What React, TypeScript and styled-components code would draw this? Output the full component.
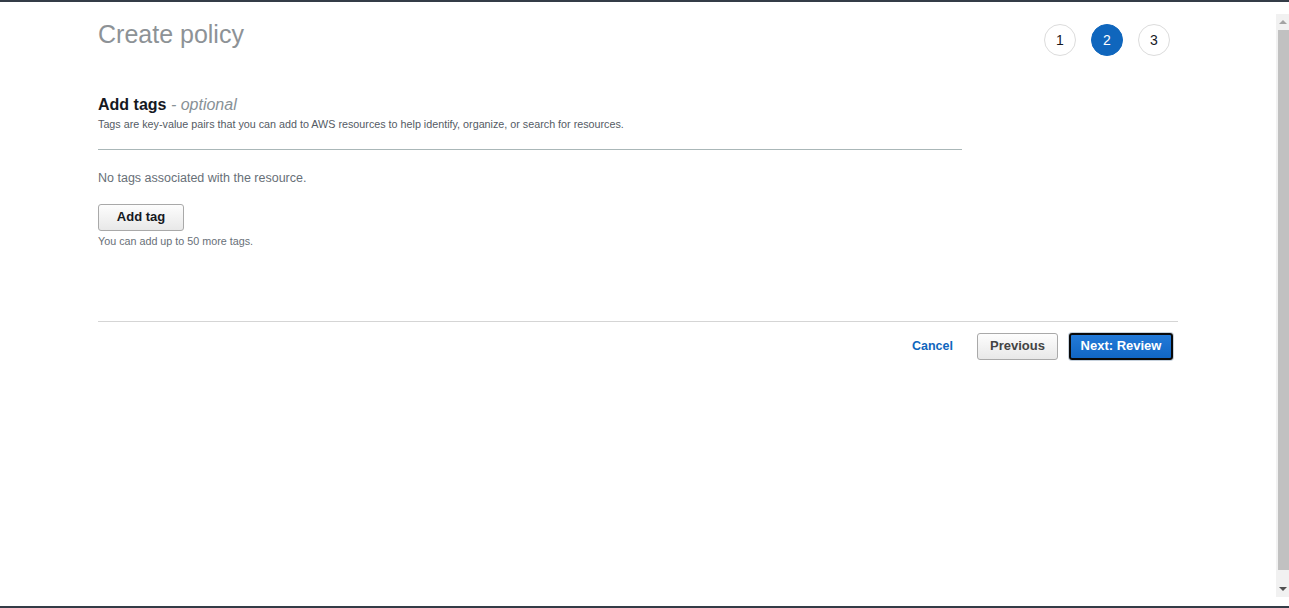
import React from "react";
import styled, { createGlobalStyle } from "styled-components";

const Global = createGlobalStyle`
  html, body { margin: 0; padding: 0; background: #fff; }
  body { font-family: "Liberation Sans", Arial, sans-serif; overflow: hidden; }
  * { box-sizing: border-box; }
`;

const Frame = styled.div`
  height: 608px;
  border-top: 2px solid #343c47;
  border-bottom: 2px solid #343c47;
  display: flex;
  flex-direction: row;
`;

const Viewport = styled.div`
  flex: 1;
  padding-left: 98px;
`;

const Page = styled.div`
  width: 1080px;
  display: flex;
  flex-direction: column;
`;

const Header = styled.div`
  display: flex;
  justify-content: space-between;
  align-items: flex-start;
  padding-top: 17px;
  padding-right: 8px;
`;

const Title = styled.h1`
  margin: 0;
  font-size: 25px;
  line-height: 30px;
  font-weight: 400;
  color: #8d9296;
`;

const Steps = styled.ol`
  list-style: none;
  margin: 5px 0 0;
  padding: 0;
  display: flex;
  gap: 15px;
`;

const Step = styled.li<{ $active?: boolean }>`
  width: 32px;
  height: 32px;
  border-radius: 50%;
  display: flex;
  align-items: center;
  justify-content: center;
  font-size: 14px;
  color: ${(p) => (p.$active ? "#fff" : "#16191f")};
  background: ${(p) => (p.$active ? "#0f66bd" : "#fff")};
  border: 1px solid ${(p) => (p.$active ? "#0f66bd" : "#dcdcdc")};
`;

const Section = styled.section`
  margin-top: 39px;
  width: 864px;
`;

const Heading = styled.h2`
  margin: 0;
  font-size: 16px;
  line-height: 20px;
  font-weight: 700;
  color: #16191f;
`;

const Optional = styled.span`
  font-weight: 400;
  font-style: italic;
  color: #879196;
`;

const Description = styled.p`
  margin: 2px 0 0;
  font-size: 10.75px;
  line-height: 14px;
  color: #545b64;
`;

const Rule = styled.hr<{ $color: string }>`
  margin: 0;
  border: 0;
  height: 1px;
  background: ${(p) => p.$color};
`;

const DivRule = styled(Rule)`
  margin-top: 18px;
`;

const Empty = styled.p`
  margin: 20px 0 0;
  font-size: 12.5px;
  line-height: 16px;
  color: #687078;
`;

const Button = styled.button<{ $primary?: boolean }>`
  font-family: inherit;
  font-size: 13px;
  font-weight: 700;
  height: 27px;
  padding: 0 0 2px;
  white-space: nowrap;
  border-radius: 3px;
  cursor: pointer;
  color: ${(p) => (p.$primary ? "#fff" : "#16191f")};
  background: ${(p) =>
    p.$primary
      ? "linear-gradient(#237ad8, #1166c4)"
      : "linear-gradient(#fdfdfd, #e8e8e8)"};
  border: ${(p) => (p.$primary ? "2px solid #0a0a0a" : "1px solid #a9a9a9")};
  box-shadow: ${(p) => (p.$primary ? "0 0 0 1px #c7d2dd" : "none")};
`;

const AddButton = styled(Button)`
  margin-top: 18px;
  align-self: flex-start;
  width: 86px;
`;

const Helper = styled.p`
  margin: 3px 0 0;
  font-size: 10.75px;
  line-height: 14px;
  color: #687078;
`;

const SectionBody = styled.div`
  display: flex;
  flex-direction: column;
`;

const Footer = styled.div`
  margin-top: 73px;
`;

const Actions = styled.div`
  display: flex;
  justify-content: flex-end;
  align-items: center;
  padding: 11px 5px 0 0;
`;

const LinkButton = styled.button`
  font-family: inherit;
  font-size: 12.5px;
  font-weight: 700;
  color: #0f66bd;
  background: none;
  border: 0;
  padding: 0 0 2px;
  margin-right: 24px;
  cursor: pointer;
`;

const PrevButton = styled(Button)`
  width: 81px;
  margin-right: 11px;
  color: #444;
`;

const NextButton = styled(Button)`
  width: 104px;
`;

const Scrollbar = styled.div`
  width: 13px;
  margin: 12px 0 9px;
  background: #f1f1f1;
  display: flex;
  flex-direction: column;
`;

const ScrollArrow = styled.div<{ $down?: boolean; $color: string }>`
  height: 16px;
  display: flex;
  align-items: center;
  justify-content: center;
  &::after {
    content: "";
    width: 0;
    height: 0;
    border-left: 4px solid transparent;
    border-right: 4px solid transparent;
    ${(p) =>
      p.$down
        ? `border-top: 4px solid ${p.$color};`
        : `border-bottom: 4px solid ${p.$color};`}
  }
`;

const Thumb = styled.div`
  height: 540px;
  margin-left: 2px;
  background: #c1c1c1;
`;

const Track = styled.div`
  flex: 1;
`;

export default function App() {
  return (
    <>
      <Global />
      <Frame>
        <Viewport>
          <Page>
            <Header>
              <Title>Create policy</Title>
              <Steps>
                <Step>1</Step>
                <Step $active>2</Step>
                <Step>3</Step>
              </Steps>
            </Header>
            <Section>
              <Heading>
                Add tags <Optional>- optional</Optional>
              </Heading>
              <Description>
                Tags are key-value pairs that you can add to AWS resources to help identify,
                organize, or search for resources.
              </Description>
              <DivRule $color="#aab7b8" />
              <SectionBody>
                <Empty>No tags associated with the resource.</Empty>
                <AddButton>Add tag</AddButton>
                <Helper>You can add up to 50 more tags.</Helper>
              </SectionBody>
            </Section>
            <Footer>
              <Rule $color="#d5d5d5" />
              <Actions>
                <LinkButton>Cancel</LinkButton>
                <PrevButton>Previous</PrevButton>
                <NextButton $primary>Next: Review</NextButton>
              </Actions>
            </Footer>
          </Page>
        </Viewport>
        <Scrollbar>
          <ScrollArrow $color="#a3a3a3" />
          <Thumb />
          <Track />
          <ScrollArrow $down $color="#505050" />
        </Scrollbar>
      </Frame>
    </>
  );
}
